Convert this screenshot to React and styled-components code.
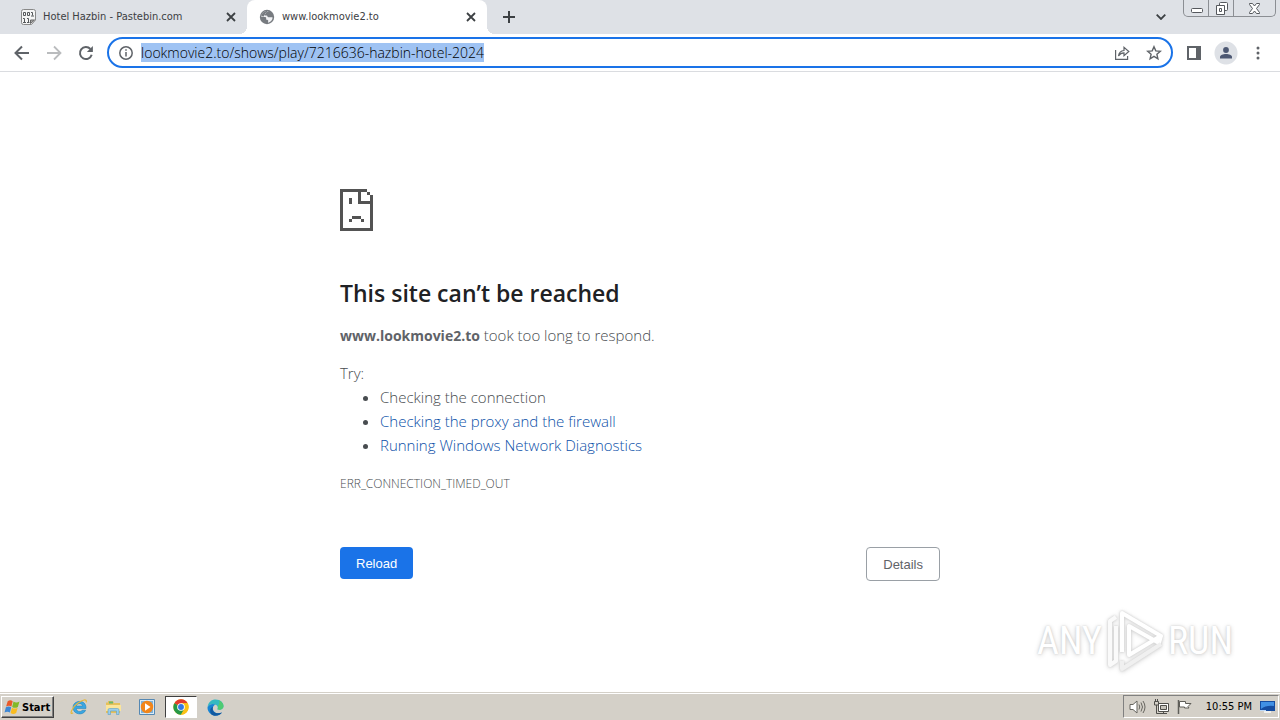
import React, { useEffect, useRef } from "react";
import styled, { createGlobalStyle } from "styled-components";

const GlobalStyle = createGlobalStyle`
  * { box-sizing: border-box; }
  body { margin: 0; background: #fff; }
  button { font: inherit; cursor: pointer; }
  svg { display: block; flex: none; }
`;

const ui = `"DejaVu Sans Condensed", "DejaVu Sans", sans-serif`;

const Screen = styled.div`
  display: flex;
  flex-direction: column;
  min-height: 100vh;
  font-family: ${ui};
`;

/* Tab strip */
const TabStrip = styled.header`
  display: flex;
  height: 34px;
  background: #dee1e6;
  color: #3c4043;
`;

const Tab = styled.div`
  position: relative;
  display: flex;
  align-items: center;
  gap: 7px;
  width: ${(p) => (p.$active ? 240 : 247)}px;
  padding: 0 10px 0 ${(p) => (p.$active ? 12 : 20)}px;
  border-radius: 8px 8px 0 0;
  background: ${(p) => (p.$active ? "#fff" : "transparent")};
  font-size: 11px;
  line-height: 16px;

  &::before,
  &::after {
    content: "";
    display: ${(p) => (p.$active ? "block" : "none")};
    position: absolute;
    bottom: 0;
    width: 8px;
    height: 8px;
  }
  &::before {
    left: -8px;
    background: radial-gradient(circle at 0 0, #dee1e6 8px, #fff 8px);
  }
  &::after {
    right: -8px;
    background: radial-gradient(circle at 100% 0, #dee1e6 8px, #fff 8px);
  }
`;

const TabTitle = styled.span`
  flex: 1;
  white-space: nowrap;
`;

const IconButton = styled.button`
  display: flex;
  align-items: center;
  justify-content: center;
  width: ${(p) => p.$size || 32}px;
  height: ${(p) => p.$size || 32}px;
  padding: 0;
  border: 0;
  border-radius: 50%;
  background: ${(p) => p.$fill || "transparent"};
  color: ${(p) => p.$color || "#5f6368"};
`;

const NewTab = styled.div`
  display: flex;
  align-items: center;
  padding-left: 6px;
  flex: 1;
`;

const TabSearch = styled.div`
  display: flex;
  align-items: center;
  padding-right: 6px;
`;

const WindowControls = styled.div`
  display: flex;
  width: 93px;
  height: 17px;
  margin-right: 4px;
  border: 1px solid #8b8e93;
  border-top: 0;
  border-radius: 0 0 5px 5px;
`;

const WindowButton = styled.button`
  display: flex;
  align-items: center;
  justify-content: center;
  flex: ${(p) => p.$grow || 25};
  padding: 0;
  border: 0;
  border-left: ${(p) => (p.$divided ? "1px solid #8b8e93" : "0")};
  background: transparent;
  color: #55585d;
`;

/* Toolbar */
const Toolbar = styled.nav`
  display: flex;
  align-items: center;
  height: 38px;
  padding: 0 6px 0 6px;
  border-bottom: 1px solid #dadce0;
  background: #fff;
`;

const Omnibox = styled.form`
  display: flex;
  align-items: center;
  flex: 1;
  height: 31px;
  margin: 0 5px;
  padding: 0 1px 0 2px;
  border: 2px solid #1a73e8;
  border-radius: 16px;
`;

const Address = styled.input`
  flex: 1;
  min-width: 0;
  height: 27px;
  padding: 0;
  border: 0;
  outline: 0;
  background: transparent;
  color: #202124;
  font-family: "Open Sans", "Noto Sans", sans-serif;
  font-size: 14px;
  font-weight: 300;
  line-height: 20px;

  &::selection {
    background: #9fc3f3;
    color: #000;
  }
`;

/* Error page */
const Page = styled.main`
  position: relative;
  flex: 1;
  padding: 117px 24px 0;
  color: #484c50;
  font-family: "Open Sans", "Noto Sans", sans-serif;
  font-size: 15px;
  font-weight: 300;
  line-height: 24px;
`;

const Message = styled.section`
  max-width: 600px;
  margin: 0 auto;
`;

const Title = styled.h1`
  margin: 48px 0 16px;
  color: #202124;
  font-size: 23px;
  font-weight: 600;
  line-height: 28px;
`;

const Host = styled.strong`
  color: #5f6368;
  font-size: 14px;
  font-weight: 700;
  line-height: 20px;
`;

const Paragraph = styled.p`
  margin: ${(p) => p.$top || 0}px 0 0;
`;

const Tips = styled.ul`
  margin: 0;
  padding-left: 40px;
`;

const TipLink = styled.a`
  color: #0b50a8;
  text-decoration: none;
`;

const ErrorCode = styled.div`
  margin-top: 15px;
  font-size: 12px;
  line-height: 24px;
`;

const Actions = styled.div`
  display: flex;
  justify-content: space-between;
  align-items: flex-start;
  margin-top: 51px;
`;

const ActionButton = styled.button`
  height: ${(p) => (p.$primary ? 32 : 34)}px;
  padding: 2px 16px 0;
  border: ${(p) => (p.$primary ? "0" : "1px solid #9aa0a6")};
  border-radius: 4px;
  background: ${(p) => (p.$primary ? "#1a73e8" : "#fff")};
  color: ${(p) => (p.$primary ? "#fff" : "#5f6368")};
  font-family: "Liberation Sans", Arial, sans-serif;
  font-size: 13px;
`;

const Watermark = styled.div`
  position: absolute;
  right: 47px;
  bottom: 16px;
  display: flex;
  align-items: center;
  gap: 4px;
  color: #fff;
  font-family: "Roboto Condensed", Roboto, sans-serif;
  font-size: 38px;
  font-weight: 400;
  line-height: 70px;
  text-shadow: 0 0 2px #ccc, 0 1px 5px #ccc;
  pointer-events: none;

  svg { filter: drop-shadow(0 0 1px #ccc) drop-shadow(0 1px 2px #ddd); }
`;

/* Taskbar */
const Taskbar = styled.footer`
  display: flex;
  align-items: stretch;
  height: 28px;
  padding: 2px 1px 1px 1px;
  border-top: 1px solid #d4d0c8;
  box-shadow: inset 0 1px #fff;
  background: #d4d0c8;
  color: #000;
  font-size: 11px;
`;

const StartButton = styled.button`
  display: flex;
  align-items: center;
  width: 53px;
  height: 22px;
  margin: 1px 8px 0 0;
  padding: 0 2px;
  border: 1px solid;
  border-color: #fff #404040 #404040 #fff;
  box-shadow: inset -1px -1px #808080;
  background: #d4d0c8;
  color: #000;
  font-family: ${ui};
  font-size: 11px;
  font-weight: 700;
`;

const TaskButton = styled.button`
  display: flex;
  align-items: center;
  justify-content: center;
  width: ${(p) => (p.$pressed ? 32 : 34)}px;
  height: 22px;
  margin: 1px ${(p) => (p.$pressed ? 1 : 0)}px 0;
  padding: 0;
  border: ${(p) => (p.$pressed ? "1px solid" : "0")};
  border-color: #404040 #fff #fff #404040;
  background: ${(p) => (p.$pressed ? "#fff" : "transparent")};
`;

const Tray = styled.div`
  display: flex;
  align-items: center;
  gap: 7px;
  height: 23px;
  margin-left: auto;
  padding: 0 3px 0 5px;
  border: 1px solid;
  border-color: #808080 #fff #fff #808080;
  white-space: nowrap;
`;

const Clock = styled.time`
  margin-left: 6px;
`;

const Cross = () => (
  <svg width="10" height="10" viewBox="0 0 10 10" stroke="currentColor" strokeWidth="1.8">
    <path d="M1 1l8 8M9 1l-8 8" />
  </svg>
);

const PasteIcon = () => (
  <svg width="16" height="16" viewBox="0 0 16 16" fill="none" stroke="#55585b">
    <path d="M1.500 2.500q0-2 2-2h10q2 0 2 2V11l-4 4.500h-8q-2 0-2-2z" fill="#f5f5f5" stroke="#888" />
    <path d="M3.500 3.500h2v3h-2zM7.500 3.500h2v3h-2zM11 3.500h1.500v3M11 7h3M3 9.500h1.500V13M3 13.500h3M7 9.500h1.500V13M7 13.500h2.500" />
    <path d="M10.500 14.500v-3.500h4z" fill="#aaa" stroke="#666" />
  </svg>
);

const GlobeIcon = () => (
  <svg width="16" height="16" viewBox="0 0 16 16">
    <circle cx="8" cy="8" r="7.200" fill="#777b80" />
    <path d="M9.500 2.300c-1 .7-2.500.5-2.500 1.700.2 1-1.300.8-1.500 1.800-.1.900 1.200.6 2 .8 1.200.3.8 1.500 2 1.700 1.200.1 2.800-.3 4.200.2-.4 2.700-2.200 4.700-4.700 5.200-.2-1.100.6-1.500.2-2.300-.5-.8-1.700-.2-2-1.200-.2-.8.300-1.500-.4-2-1.300-.6-3 .1-4.500-.3 0-3.400 3.500-6.600 7.200-5.600z" fill="#f1f2f4" />
    <path d="M9.200 1.800C5.500 1.800 2.800 4 2.300 7.300l2.600.1c.2-1.700 1.300-1.500 1.500-2.600.2-1.400 1.700-1.500 2.800-3z" fill="#777b80" />
  </svg>
);

const StartIcon = () => (
  <svg width="18" height="18" viewBox="0 0 17 17">
    <path d="M3.500 3Q6 1.400 8.200 3L7 8Q4.700 6.500 2 8z" fill="#ea5a29" />
    <path d="M9 3.400q2.500 1.600 5.600 0l-1.500 5Q10.300 10 7.700 8.400z" fill="#82b928" />
    <path d="M1.800 8.800q2.700-1.600 5 0l-1.200 5Q3.300 12.300.5 13.800z" fill="#3d87d5" />
    <path d="M7.500 9.200q2.600 1.600 5.400 0l-1.400 5q-2.700 1.600-5.300 0z" fill="#f9bc20" />
  </svg>
);

const IEIcon = () => (
  <svg width="18" height="18" viewBox="0 0 18 18" fill="none">
    <path d="M16 10.500H6.300c.3 3.500 4.700 4 6 1.700h3.300C13.600 18 3 17 3 9.500 3 1.600 16.600.7 16 10.500zM6.300 8h6.300C12.200 4.900 6.900 4.900 6.300 8z" fill="#39a6e2" stroke="#187db7" strokeWidth=".5" />
    <path d="M3 14.700c-4.100 3.500-1.300-5.400 5-9.600 4.500-3.200 9-4.800 8.300-.8" stroke="#e5b73b" strokeWidth="1.200" />
  </svg>
);

const FolderIcon = () => (
  <svg width="17" height="17" viewBox="0 0 17 17">
    <path d="M1 3.500h2V2h5l1 2h6v10H1z" fill="#e5c05b" />
    <path d="M4 2.500h4v2H4z" fill="#68b86c" />
    <path d="M1 6h15v6H1z" fill="#fbe59a" />
    <path d="M3 15.500V11q0-1.500 1.500-1.500h8q1.500 0 1.500 1.500v4.500h-2.500V12h-6v3.500z" fill="#9bcdec" stroke="#5b9fc4" strokeWidth=".6" />
  </svg>
);

const MediaIcon = () => (
  <svg width="16" height="16" viewBox="0 0 16 16">
    <path d="M.5.5h15v15H.5z" fill="#d9ebf7" stroke="#5588b3" />
    <path d="M2 2h12v12H2z" fill="#7eb2da" />
    <circle cx="8" cy="8" r="6.200" fill="#f28519" />
    <path d="M6 4.200v7.600L11.500 8z" fill="#fff" />
  </svg>
);

const ChromeIcon = () => (
  <svg width="16" height="16" viewBox="0 0 48 48">
    <circle cx="24" cy="24" r="23" fill="#fbc116" />
    <path d="M24 24L4.100 12.500A23 23 0 0 1 43.900 12.500H24z" fill="#e33b2e" />
    <path d="M24 24L4.100 12.500A23 23 0 0 0 24 47l10-17z" fill="#279847" />
    <path d="M24 13h20A23 23 0 0 1 24 47l10-17z" fill="#fbc116" />
    <circle cx="24" cy="24" r="11.500" fill="#fff" />
    <circle cx="24" cy="24" r="8.800" fill="#3478e5" />
  </svg>
);

const EdgeIcon = () => (
  <svg width="17" height="17" viewBox="0 0 17 17">
    <path d="M.6 8C1.200 3 4.500.5 8.600.5c5 0 8 3.400 7.900 6.800-.1 3-3.200 4-6.200 3 .8-1 .8-3.300-1.400-4.500C6 4.300 2.400 5 .6 8z" fill="#35b9c0" />
    <path d="M12 1.300c3 1.300 4.600 3.700 4.500 6-.1 3-3.200 4-6.200 3 1.200-1 .9-2.700.3-3.600 2-1 2.200-3.500 1.400-5.400z" fill="#4fcb72" />
    <path d="M.6 8C2.400 5 6 4.300 8.900 5.800c-3 .2-4.200 4.200-1.900 6.700 2 2.200 5.500 2.300 8 .9C12.500 17 7 17.600 3.500 14.800 1.200 13 .2 10.600.6 8z" fill="#1684d4" />
    <path d="M6.200 7.500C4 12 8 15.800 15 13.400 12.500 17 7 17.600 4.500 15.400 2 12.300 3.200 8.800 6.200 7.500z" fill="#1359a0" />
  </svg>
);

const SpeakerIcon = () => (
  <svg width="17" height="16" viewBox="0 0 17 16" fill="none" stroke="#66655f">
    <path d="M1 5.500h3L8 2v12l-4-3.500H1z" fill="#fff" />
    <path d="M10 5.500q1.500 2.500 0 5M12 3.500q3 4.500 0 9M14 2q4 6 0 12" />
  </svg>
);

const NetworkIcon = () => (
  <svg width="16" height="16" viewBox="0 0 16 16" fill="none" stroke="#4f4e4a">
    <path d="M5.500 4.500h10v8h-10z" fill="#fff" />
    <path d="M7.500 6.500h6v4h-6z" fill="#c6c3bb" />
    <path d="M8 14.500h6M10.500 12.500v2M1.500 2.500h4V6h-4zM2.500 0v2M4.500 0v2M3.500 6v8.500H8" />
  </svg>
);

const FlagIcon = () => (
  <svg width="17" height="16" viewBox="0 0 17 16" fill="#fff" stroke="#5f5e59">
    <path d="M2.500 1v14" strokeWidth="1.500" />
    <path d="M3.500 2.500h6v2H15l-3 3 1 1.500H8.500V8h-5z" />
  </svg>
);

const DesktopIcon = () => (
  <svg width="16" height="15" viewBox="0 0 16 15">
    <path d="M1 2h15v10H1z" fill="#164ca0" />
    <path d="M2 3h13v4Q7 6 2 10z" fill="#4190e4" />
    <path d="M5 12h7v2H5z" fill="#f0f0ed" />
    <path d="M1 11.500h6" stroke="#bddafa" />
  </svg>
);

const SadPage = () => (
  <svg width="33" height="42" viewBox="0 0 33 42" fill="#535353" shapeRendering="crispEdges" role="img" aria-label="Page unavailable">
    <path d="M0 0h27v3H3v36h27V15H18V3h3v9h9V6h3v36H0zM27 3h3v3h-3zM9 9h3v6H9zM12 27h9v3h-9zM9 30h3v3H9zM21 30h3v3h-3z" />
  </svg>
);

export default function App() {
  const address = useRef(null);

  useEffect(() => {
    address.current.focus();
    address.current.select();
  }, []);

  return (
    <Screen>
      <GlobalStyle />
      <TabStrip>
        <Tab>
          <PasteIcon />
          <TabTitle>Hotel Hazbin - Pastebin.com</TabTitle>
          <IconButton $size={12} $color="#3c4043" aria-label="Close tab"><Cross /></IconButton>
        </Tab>
        <Tab $active>
          <GlobeIcon />
          <TabTitle>www.lookmovie2.to</TabTitle>
          <IconButton $size={12} $color="#3c4043" aria-label="Close tab"><Cross /></IconButton>
        </Tab>
        <NewTab>
          <IconButton $color="#3c4043" aria-label="New tab">
            <svg width="12" height="12" viewBox="0 0 12 12" stroke="currentColor" strokeWidth="2"><path d="M6 0v12M0 6h12" /></svg>
          </IconButton>
        </NewTab>
        <TabSearch>
          <IconButton $color="#3c4043" aria-label="Search tabs">
            <svg width="10" height="6" viewBox="0 0 10 6" fill="none" stroke="currentColor" strokeWidth="1.800"><path d="M.7.7L5 5 9.300.7" /></svg>
          </IconButton>
        </TabSearch>
        <WindowControls>
          <WindowButton aria-label="Minimize">
            <svg width="13" height="17" viewBox="0 0 13 17"><rect x="1.500" y="8.500" width="11" height="4" rx="1" fill="#fff" stroke="currentColor" /></svg>
          </WindowButton>
          <WindowButton $divided aria-label="Restore">
            <svg width="13" height="15" viewBox="0 0 13 15" fill="#fff" stroke="currentColor"><rect x="4.500" y="1.500" width="8" height="8" rx="1" /><path d="M1.500 4.500h8v9h-8zM4.500 7.500h2v3h-2z" /></svg>
          </WindowButton>
          <WindowButton $divided $grow={42} aria-label="Close">
            <svg width="13" height="11" viewBox="0 0 13 11" fill="#fff" stroke="currentColor"><path d="M1.500.5h3l2 2.500 2-2.500h3v1L8.500 5.500l3 4v1h-3l-2-2.500-2 2.500h-3v-1l3-4-3-4z" /></svg>
          </WindowButton>
        </WindowControls>
      </TabStrip>

      <Toolbar>
        <IconButton aria-label="Back">
          <svg width="16" height="16" viewBox="0 0 16 16" fill="none" stroke="currentColor" strokeWidth="2"><path d="M15 8H2M8 1.500L1.500 8 8 14.500" /></svg>
        </IconButton>
        <IconButton $color="#babcbe" aria-label="Forward">
          <svg width="16" height="16" viewBox="0 0 16 16" fill="none" stroke="currentColor" strokeWidth="1.800"><path d="M1 8h13M8 1.500L14.500 8 8 14.500" /></svg>
        </IconButton>
        <IconButton aria-label="Reload page">
          <svg width="16" height="16" viewBox="0 0 16 16"><path d="M13.700 9.800A6 6 0 1 1 12.400 4" fill="none" stroke="currentColor" strokeWidth="2" /><path d="M14.900.9v6H8.900z" fill="currentColor" /></svg>
        </IconButton>
        <Omnibox>
          <IconButton type="button" $size={30} aria-label="View site information">
            <svg width="14" height="14" viewBox="0 0 14 14" fill="none" stroke="currentColor" strokeWidth="1.500"><circle cx="7" cy="7" r="6.200" /><path d="M7 6v4.500M7 3.300v1.500" /></svg>
          </IconButton>
          <Address ref={address} aria-label="Address" defaultValue="lookmovie2.to/shows/play/7216636-hazbin-hotel-2024" spellCheck={false} />
          <IconButton type="button" aria-label="Share page">
            <svg width="16" height="16" viewBox="0 0 16 16" fill="none" stroke="currentColor" strokeWidth="1.200"><path d="M1.600 5v9.400h12V11M4.500 11C5 7.400 7 5.800 10 5.500V2.300L14.800 6.500 10 10.600V7.900C7.600 7.900 5.800 8.900 4.500 11z" /></svg>
          </IconButton>
          <IconButton type="button" aria-label="Bookmark this tab">
            <svg width="16" height="16" viewBox="0 0 16 16" fill="none" stroke="currentColor" strokeWidth="1.400"><path d="M8 1.700l1.800 4.200 4.600.4-3.500 3 1 4.500L8 11.400l-3.900 2.400 1-4.500-3.500-3 4.600-.4z" /></svg>
          </IconButton>
        </Omnibox>
        <IconButton aria-label="Side panel">
          <svg width="14" height="14" viewBox="0 0 14 14" fill="none" stroke="currentColor" strokeWidth="2"><path d="M1 1h12v12H1z" /><path d="M11 1v12" strokeWidth="4" /></svg>
        </IconButton>
        <IconButton $fill="radial-gradient(circle, #dee1e6 11px, transparent 12px)" $color="#4d5873" aria-label="Profile">
          <svg width="14" height="14" viewBox="0 0 14 14" fill="currentColor"><circle cx="7" cy="4" r="2.900" /><path d="M1 12.500V11c0-4 12-4 12 0v1.500z" /></svg>
        </IconButton>
        <IconButton aria-label="Menu">
          <svg width="4" height="14" viewBox="0 0 4 14" fill="currentColor"><circle cx="2" cy="2" r="1.500" /><circle cx="2" cy="7" r="1.500" /><circle cx="2" cy="12" r="1.500" /></svg>
        </IconButton>
      </Toolbar>

      <Page>
        <Message>
          <SadPage />
          <Title>This site can’t be reached</Title>
          <Paragraph><Host>www.lookmovie2.to</Host> took too long to respond.</Paragraph>
          <Paragraph $top={14}>Try:</Paragraph>
          <Tips>
            <li>Checking the connection</li>
            <li><TipLink href="#proxy">Checking the proxy and the firewall</TipLink></li>
            <li><TipLink href="#diagnostics">Running Windows Network Diagnostics</TipLink></li>
          </Tips>
          <ErrorCode>ERR_CONNECTION_TIMED_OUT</ErrorCode>
          <Actions>
            <ActionButton $primary>Reload</ActionButton>
            <ActionButton>Details</ActionButton>
          </Actions>
        </Message>
        <Watermark>
          <span>ANY</span>
          <svg width="58" height="64" viewBox="0 0 58 64" fill="none" strokeWidth="4" strokeLinejoin="round">
            <path d="M16 43V4L55 27l-2 7-30-17v29l30-18" stroke="#fff" />
            <path d="M10 8L4 12v44l6-4V17" stroke="#fafafa" />
            <path d="M16 52v8l39-25" stroke="#f0f0f0" />
          </svg>
          <span>RUN</span>
        </Watermark>
      </Page>

      <Taskbar>
        <StartButton><StartIcon />Start</StartButton>
        <TaskButton aria-label="Internet Explorer"><IEIcon /></TaskButton>
        <TaskButton aria-label="File Explorer"><FolderIcon /></TaskButton>
        <TaskButton aria-label="Media Player"><MediaIcon /></TaskButton>
        <TaskButton $pressed aria-label="Chrome"><ChromeIcon /></TaskButton>
        <TaskButton aria-label="Edge"><EdgeIcon /></TaskButton>
        <Tray>
          <SpeakerIcon />
          <NetworkIcon />
          <FlagIcon />
          <Clock>10:55 PM</Clock>
          <DesktopIcon />
        </Tray>
      </Taskbar>
    </Screen>
  );
}
